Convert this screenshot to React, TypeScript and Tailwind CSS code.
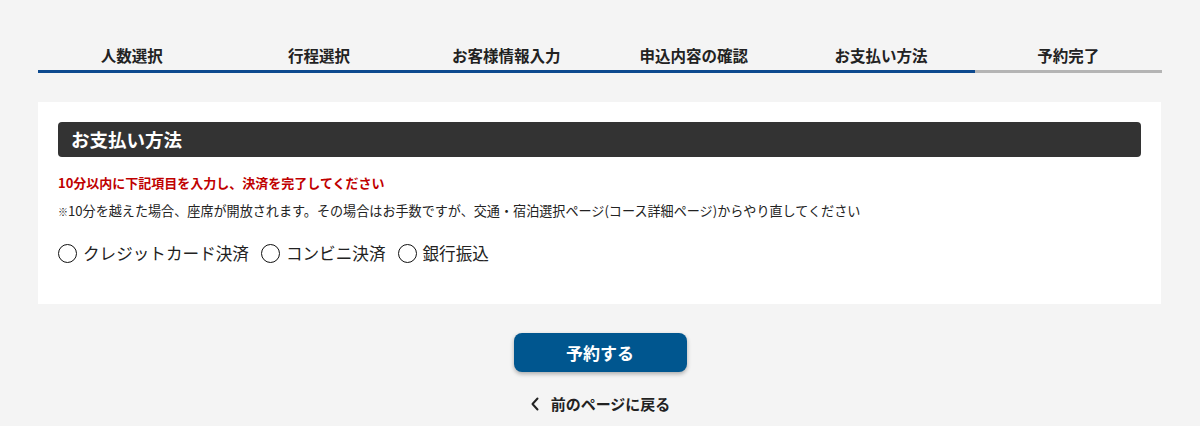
import React from 'react';

const STEPS = ['人数選択', '行程選択', 'お客様情報入力', '申込内容の確認', 'お支払い方法', '予約完了'];
const CURRENT = 4;

const METHODS = ['クレジットカード決済', 'コンビニ決済', '銀行振込'];

const FONT = { fontFamily: '"Noto Sans CJK JP", "Noto Sans", sans-serif' };

export default function App() {
  return (
    <div className="min-h-[426px] bg-[#f4f4f4] text-[#222]" style={FONT}>
      {/* ── Step indicator ── */}
      <div className="mx-[38px] w-[1124px] pt-[44px] grid grid-cols-6">
        {STEPS.map((step, i) => (
          <div key={step} className="flex flex-col">
            <div className="text-center text-[15.5px] font-bold leading-[22px] text-[#222]">{step}</div>
            <div className={`mt-[4px] h-[3px] ${i <= CURRENT ? 'bg-[#0d4a8f]' : 'bg-[#b4b4b4]'}`} />
          </div>
        ))}
      </div>

      {/* ── Payment card ── */}
      <div className="mx-[38px] w-[1123px] mt-[29px] bg-white px-[20px] pt-[20px] pb-[39px]">
        <div className="h-[35px] rounded-[4px] bg-[#333333] pl-[13px] text-[18.5px] font-bold leading-[35px] text-white">
          お支払い方法
        </div>
        <p className="mt-[16px] text-[13px] font-bold leading-[20px] text-[#c00000]">
          10分以内に下記項目を入力し、決済を完了してください
        </p>
        <p className="mt-[8px] text-[13.1px] leading-[20px] text-[#222]">
          <span className="text-[10px]">※</span>10分を越えた場合、座席が開放されます。その場合はお手数ですが、交通・宿泊選択ページ(コース詳細ページ)からやり直してください
        </p>
        <div className="mt-[19px] flex items-center gap-[12px]">
          {METHODS.map((m) => (
            <label key={m} className="flex items-center gap-[6px] text-[16.6px] leading-[24px] text-[#222]">
              <span className="inline-block w-[19px] h-[19px] rounded-full border-[1.5px] border-[#111]" />
              {m}
            </label>
          ))}
        </div>
      </div>

      {/* ── Actions ── */}
      <div className="flex flex-col items-center">
        <button className="mt-[29px] h-[39px] w-[173px] rounded-[8px] bg-[#00568f] text-[17px] font-bold text-white shadow-[0_2px_4px_rgba(0,0,0,0.3)]">
          予約する
        </button>
        <a className="mt-[22px] flex items-center gap-[11px] text-[15px] font-bold leading-[20px] text-[#222]">
          <svg width="10" height="14" viewBox="0 0 10 14" fill="none">
            <path d="M7.5 1.5 L2.5 7 L7.5 12.5" stroke="#222" strokeWidth="2" strokeLinecap="round" strokeLinejoin="round" />
          </svg>
          前のページに戻る
        </a>
      </div>
    </div>
  );
}
